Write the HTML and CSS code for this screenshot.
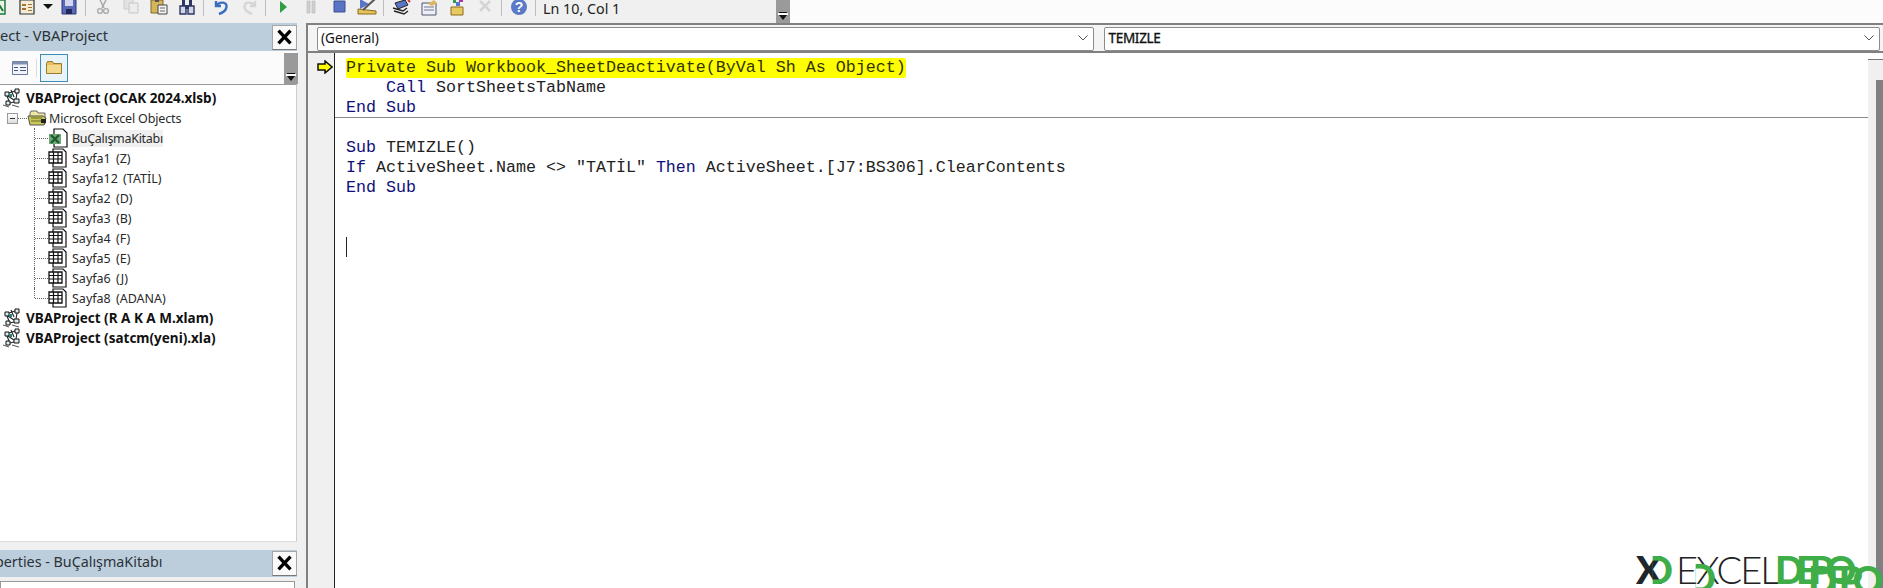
FILE: index.html
```html
<!DOCTYPE html>
<html lang="tr">
<head>
<meta charset="utf-8">
<title>VBA Editor</title>
<link rel="stylesheet" href="styles.css">
</head>
<body>
<svg class="defs" aria-hidden="true">
  <symbol id="project" viewBox="0 0 20 20">
    <path d="M3 4h4v4H3zM13 1h4v4h-4zM12 11h5v4h-5zM4 13h4v4H4z" fill="#dfeeee" stroke="#111" stroke-width="1"/>
    <path d="M5 8l2 5M7 5l6-2M15 5l-1 6M8 15l4-1M6 8l6 4M9 2l3 7" fill="none" stroke="#222" stroke-width="1.100"/>
    <path d="M7 6h3v3H7z" fill="#2f7f86"/>
    <path d="M1 17l6 2M10 17l7 2" stroke="#555" stroke-width="1"/>
  </symbol>
  <symbol id="folder" viewBox="0 0 20 20">
    <path d="M3 5l1-2h6l1 2h7v11H3z" fill="#f0e7a0" stroke="#666" stroke-width="1"/>
    <path d="M1 8h15l3 2-2 7H3z" fill="#c8c85a" stroke="#555" stroke-width="1"/>
    <path d="M4 10h11M4 13h12" stroke="#8a8a30" stroke-width="1.500"/>
    <path d="M14 11h5v4h-5z" fill="#222"/>
  </symbol>
  <symbol id="sheet" viewBox="0 0 20 20">
    <path d="M5 1h10l3 3v15H5z" fill="#fff" stroke="#111" stroke-width="1.200"/>
    <path d="M1 4h13v11H1z" fill="#fff" stroke="#111" stroke-width="1.300"/>
    <path d="M1 7.500h13M1 11h13M5.500 4v11M10 4v11" stroke="#111" stroke-width="1.200"/>
  </symbol>
  <symbol id="book" viewBox="0 0 20 20">
    <path d="M6 1h9l4 4v14H6z" fill="#fff" stroke="#111" stroke-width="1.200"/>
    <path d="M1 6h12v10H1z" fill="#6fa97b"/>
    <path d="M3 7l8 8M11 7l-8 8" stroke="#1f5a2d" stroke-width="2.400"/>
  </symbol>
  <symbol id="close" viewBox="0 0 25 25">
    <path d="M6 5l13 14M19 5L6 19" fill="none" stroke="#000" stroke-width="3.600"/>
  </symbol>
</svg>

<div class="app">
  <header class="toolbar">
    <svg class="ti w13" viewBox="0 0 13 20"><path d="M-8 1h13v14H-8z" fill="#e8f3e6" stroke="#1d7a3a" stroke-width="1.500"/><path d="M-2 4l5 8" stroke="#1d7a3a" stroke-width="2"/></svg>
    <svg class="ti" viewBox="0 0 28 20"><path d="M7 1h14v14H7z" fill="#f4ecd8" stroke="#333" stroke-width="1.200"/><path d="M9 5h4v2H9zM9 9h4v2H9zM15 5h4v1h-4zM15 8h4v1h-4zM15 11h4v1h-4z" fill="#a8722c"/></svg>
    <svg class="ti w14" viewBox="0 0 14 20"><path d="M2 5h10l-5 5z" fill="#111"/></svg>
    <svg class="ti" viewBox="0 0 28 20"><path d="M7 0h14v15H7z" fill="#5a68b8" stroke="#2e377e"/><path d="M10 1h8v6h-8z" fill="#d3d6ec"/><path d="M11 10h6v5h-6z" fill="#22285a"/></svg>
    <span class="sep"></span>
    <svg class="ti" viewBox="0 0 28 20"><path d="M11 1l4 8M17 1l-4 8" stroke="#aaa" stroke-width="1.600"/><circle cx="11" cy="12" r="2.400" fill="none" stroke="#aaa" stroke-width="1.400"/><circle cx="17" cy="12" r="2.400" fill="none" stroke="#aaa" stroke-width="1.400"/></svg>
    <svg class="ti" viewBox="0 0 28 20"><path d="M7 0h9v10H7z" fill="#e2e2e2" stroke="#ccc"/><path d="M12 4h9v10h-9z" fill="#ececec" stroke="#c6c6c6"/></svg>
    <svg class="ti" viewBox="0 0 28 20"><path d="M6 1h12v13H6z" fill="#d6b45a" stroke="#7a6a2a"/><path d="M10 0h4v3h-4z" fill="#555"/><path d="M13 6h9v9h-9z" fill="#f4f4f4" stroke="#444"/><path d="M15 9h5M15 12h5" stroke="#666"/></svg>
    <svg class="ti" viewBox="0 0 28 20"><path d="M7 7h6v8H7zM15 7h6v8h-6z" fill="#cfd6ea" stroke="#2d3560" stroke-width="1.400"/><path d="M9 1h3v6H9zM16 1h3v6h-3zM12 6h4v4h-4z" fill="#2d3560"/></svg>
    <span class="sep"></span>
    <svg class="ti" viewBox="0 0 28 20"><path d="M9 2v5h5M9.500 6.500C13 2 20 3 19.500 8 19 12 15 14 12 15" fill="none" stroke="#3a6fc0" stroke-width="2.400"/></svg>
    <svg class="ti" viewBox="0 0 28 20"><path d="M20 2v5h-5M19.500 6.500C16 2 9 3 9.500 8 10 12 14 14 17 15" fill="none" stroke="#d6d6d6" stroke-width="2.400"/></svg>
    <span class="sep"></span>
    <svg class="ti" viewBox="0 0 28 20"><path d="M11 2l7 6-7 6z" fill="#2f9e44"/></svg>
    <svg class="ti" viewBox="0 0 28 20"><path d="M10 2h3v12h-3zM15 2h3v12h-3z" fill="#d0d0d0" stroke="#bbb" stroke-width=".600"/></svg>
    <svg class="ti" viewBox="0 0 28 20"><path d="M9 2h11v11H9z" fill="#5b73c4" stroke="#3d4f96"/></svg>
    <svg class="ti" viewBox="0 0 28 20"><path d="M5 10v5h18v-3z" fill="#e6c25a" stroke="#8a6c1e"/><path d="M7 0v10l9-5" fill="#5a74c6"/><path d="M10 11L22 0" stroke="#555" stroke-width="2"/></svg>
    <span class="sep"></span>
    <svg class="ti" viewBox="0 0 28 20"><path d="M8 4l10-3 3 5-10 4z" fill="#5a74c6" stroke="#222"/><path d="M6 9l10 3 4-3M7 12l10 3 4-3" fill="none" stroke="#222" stroke-width="1.400"/><path d="M21 1l2 2" stroke="#c33" stroke-width="2"/></svg>
    <svg class="ti" viewBox="0 0 28 20"><path d="M7 4h14v12H7z" fill="#eef0f8" stroke="#556"/><path d="M9 8h10M9 11h10" stroke="#778"/><path d="M13 5l6-4 3 3-5 3z" fill="#e0b65c"/></svg>
    <svg class="ti" viewBox="0 0 28 20"><path d="M8 8h12v8H8z" fill="#e8c860" stroke="#8a6c1e"/><path d="M10 1h3v3h-3z" fill="#2f9e44"/><path d="M16 0h4v3h-4z" fill="#a33aa3"/><path d="M13 3h4v4h-4z" fill="#5a74c6"/></svg>
    <svg class="ti" viewBox="0 0 28 20"><path d="M9 2l10 10M19 2L9 12" stroke="#d4d4d4" stroke-width="2.600"/></svg>
    <span class="sep"></span>
    <svg class="ti" viewBox="0 0 28 20"><circle cx="14" cy="8" r="8" fill="#5a79c8"/><text class="helpq" x="14" y="13">?</text></svg>
    <span class="sep"></span>
    <span class="pos">Ln 10, Col 1</span>
    <span class="grip top-grip"><i></i></span>
  </header>

  <main class="workspace">
    <aside class="side">
      <div class="titlebar">
        <span class="tt tt-project">ect - VBAProject</span>
        <button class="x"><svg><use href="#close"/></svg></button>
      </div>
      <div class="minibar">
        <svg class="mini-view" viewBox="0 0 16 14"><path d="M.5.500h15v13H.5z" fill="#f1f3fa" stroke="#6a7a9a"/><path d="M.5.500h15v3H.5z" fill="#7f8fb0"/><path d="M2 6h4v1H2zM2 9h4v1H2zM8 6h6v1H8zM8 9h6v1H8z" fill="#4a5878"/></svg>
        <span class="minisep"></span>
        <span class="folderbtn"><svg viewBox="0 0 16 13"><path d="M.5 2.500l1-2h5l1 2h8v10H.5z" fill="#e9bb5a" stroke="#9a7a30"/><path d="M1 4h14v8H1z" fill="#f3d98c"/></svg></span>
        <span class="grip side-grip"><i></i></span>
      </div>
      <div class="tree">
        <div class="row root"><svg class="ic"><use href="#project"/></svg><b>VBAProject (OCAK 2024.xlsb)</b></div>
        <div class="row group"><span class="minus"></span><span class="dash"></span><svg class="ic"><use href="#folder"/></svg><span>Microsoft Excel Objects</span></div>
        <div class="row leaf"><svg class="ic"><use href="#book"/></svg><span class="selected">BuÇalışmaKitabı</span></div>
        <div class="row leaf"><svg class="ic"><use href="#sheet"/></svg><span>Sayfa1 (Z)</span></div>
        <div class="row leaf"><svg class="ic"><use href="#sheet"/></svg><span>Sayfa12 (TATİL)</span></div>
        <div class="row leaf"><svg class="ic"><use href="#sheet"/></svg><span>Sayfa2 (D)</span></div>
        <div class="row leaf"><svg class="ic"><use href="#sheet"/></svg><span>Sayfa3 (B)</span></div>
        <div class="row leaf"><svg class="ic"><use href="#sheet"/></svg><span>Sayfa4 (F)</span></div>
        <div class="row leaf"><svg class="ic"><use href="#sheet"/></svg><span>Sayfa5 (E)</span></div>
        <div class="row leaf"><svg class="ic"><use href="#sheet"/></svg><span>Sayfa6 (J)</span></div>
        <div class="row leaf last"><svg class="ic"><use href="#sheet"/></svg><span>Sayfa8 (ADANA)</span></div>
        <div class="row root"><svg class="ic"><use href="#project"/></svg><b>VBAProject (R A K A M.xlam)</b></div>
        <div class="row root"><svg class="ic"><use href="#project"/></svg><b>VBAProject (satcm(yeni).xla)</b></div>
      </div>
      <div class="titlebar props">
        <span class="tt tt-props">perties - BuÇalışmaKitabı</span>
        <button class="x"><svg><use href="#close"/></svg></button>
      </div>
      <div class="propbox"><b>Alfabetik</b> <span>Kategorize</span></div>
    </aside>

    <section class="editor">
      <div class="combos">
        <div class="combo"><span>(General)</span><svg class="chev" viewBox="0 0 10 6"><path d="M.5.500L5 5 9.500.5" fill="none" stroke="#555"/></svg></div>
        <div class="combo"><span class="proc-name">TEMIZLE</span><svg class="chev" viewBox="0 0 10 6"><path d="M.5.500L5 5 9.500.5" fill="none" stroke="#555"/></svg></div>
      </div>
      <div class="codewrap">
        <div class="gutter"><svg class="exec" viewBox="0 0 16 14"><path d="M1 4h7V1l7 6-7 6v-3H1z" fill="#ffff00" stroke="#111" stroke-width="1.500"/></svg></div>
        <div class="code">
<pre class="proc"><span class="hl">Private Sub Workbook_SheetDeactivate(ByVal Sh As Object)</span>
    <span class="kw">Call</span> SortSheetsTabName
<span class="kw">End Sub</span></pre><pre>

<span class="kw">Sub</span> TEMIZLE()
<span class="kw">If</span> ActiveSheet.Name &lt;&gt; "TATİL" <span class="kw">Then</span> ActiveSheet.[J7:BS306].ClearContents
<span class="kw">End Sub</span></pre>
          <div class="caret"></div>
        </div>
        <div class="scroll"><div class="thumb"></div></div>
      </div>
    </section>
  </main>

  <div class="logo">
    <span class="lg-x">X</span>
    <span class="lg-arc a1">D</span>
    <span class="lg-thin t1">EXCEL</span>
    <span class="lg-arc a2">D</span>
    <span class="lg-depo d1">DEPO</span>
    <span class="lg-depo d2">DEPO</span>
  </div>
</div>
</body>
</html>
```
FILE: styles.css
```css
html, body { margin: 0; padding: 0; height: 100%; overflow: hidden; }
body { background: #fdfcfc; font-family: "Noto Sans", "Open Sans", sans-serif; color: #222; }
.defs { position: absolute; width: 0; height: 0; }
.app { position: relative; width: 1883px; height: 588px; overflow: hidden; display: flex; flex-direction: column; }

.toolbar { height: 23px; width: 790px; flex: none; background: #f0f0f0; display: flex; align-items: flex-start; overflow: hidden; position: relative; }
.ti { width: 28px; height: 20px; flex: none; margin-top: -1px; }
.w13 { width: 13px; }
.w14 { width: 14px; }
.helpq { font: bold 14px "Liberation Sans", sans-serif; fill: #fff; text-anchor: middle; }
.sep { width: 6px; flex: none; height: 16px; box-sizing: border-box; padding-left: 2px; }
.sep::before { content: ""; display: block; width: 1px; height: 16px; background: #bdbdbd; }
.pos { margin-left: 4px; font-size: 14.300px; line-height: 18px; color: #222; white-space: nowrap; }
.grip { background: #9a9a9a; position: absolute; display: block; }
.grip i { position: absolute; left: 3px; bottom: 3px; width: 0; height: 0; border-left: 4px solid transparent; border-right: 4px solid transparent; border-top: 5px solid #111; }
.grip i::before { content: ""; position: absolute; left: -4px; top: -8px; width: 8px; height: 1px; background: #111; }
.grip i::after { content: ""; position: absolute; left: -5px; top: -7px; width: 10px; height: 2px; background: #fff; }
.top-grip { right: 0; top: 0; width: 14px; height: 23px; }

.workspace { flex: 1; min-height: 0; display: flex; }
.side { width: 306px; flex: none; background: #f0f0f0; display: flex; flex-direction: column; box-sizing: border-box; padding-right: 9px; }
.titlebar { height: 28px; flex: none; background: #bccddc; display: flex; align-items: center; overflow: hidden; }
.tt { font-size: 14.600px; color: #2b3238; white-space: nowrap; flex: 1; min-width: 0; padding-bottom: 5px; }
.tt-props { font-size: 14.300px; margin-left: -5px; }
.x { width: 25px; height: 25px; flex: none; padding: 0; box-sizing: border-box; background: #fafafa; border: 1px solid #a6a6a6; border-bottom-color: #777; display: block; }
.x svg { width: 23px; height: 23px; display: block; }

.minibar { height: 33px; flex: none; background: #fbfbfb; display: flex; align-items: center; position: relative; padding-left: 12px; box-sizing: border-box; }
.mini-view { width: 16px; height: 14px; flex: none; }
.minisep { width: 1px; height: 18px; background: #ddd; margin-left: 8px; }
.folderbtn { width: 28px; height: 28px; margin-left: 3px; box-sizing: border-box; border: 1px solid #3f8cb5; background: #e9f3fa; display: flex; align-items: center; justify-content: center; }
.folderbtn svg { width: 16px; height: 13px; }
.side-grip { right: -1px; top: 2px; width: 14px; height: 31px; }

.tree { flex: none; height: 458px; box-sizing: border-box; background: #fff; border-top: 1px solid #999; border-right: 1px solid #ccc; border-bottom: 1px solid #ddd; padding-top: 3px; }
.row { height: 20px; display: flex; align-items: center; position: relative; font-size: 12.500px; white-space: nowrap; color: #2a2a2a; }
.row b { font-size: 13.500px; color: #111; }
.ic { width: 20px; height: 20px; flex: none; margin-right: 4px; }
.root { padding-left: 2px; }
.group { padding-left: 7px; letter-spacing: -.15px; }
.minus { width: 9px; height: 9px; border: 1px solid #999; background: linear-gradient(#fff, #ddd); position: relative; flex: none; }
.minus::after { content: ""; position: absolute; left: 2px; top: 4px; width: 5px; height: 1px; background: #333; }
.dash { width: 9px; border-top: 1px dotted #666; flex: none; }
.group .ic { margin-right: 2px; }
.leaf { padding-left: 48px; word-spacing: 2px; }
.leaf .ic { margin-right: 4px; }
.leaf::before { content: ""; position: absolute; left: 34px; top: 0; height: 100%; border-left: 1px dotted #666; }
.leaf.last::before { height: 50%; }
.leaf::after { content: ""; position: absolute; left: 35px; top: 50%; width: 13px; border-top: 1px dotted #666; }
.selected { background: #f0f0f0; letter-spacing: -.3px; }

.props { margin-top: 8px; height: 27px; }
.propbox { margin: 4px 2px 0 0; flex: 1; min-height: 0; overflow: hidden; background: #fff; border: 1px solid #999; border-bottom: 0; padding: 5px 0 0 8px; font-size: 13px; line-height: 14px; }

.editor { flex: 1; min-width: 0; display: flex; flex-direction: column; border-left: 2px solid #808080; }
.combos { height: 30px; flex: none; box-sizing: border-box; border-top: 2px solid #808080; border-bottom: 2px solid #808080; background: #f4f4f4; display: flex; gap: 10px; padding: 2px 3px 0 9px; }
.combo { flex: 1; height: 24px; box-sizing: border-box; background: #fff; border: 1px solid #8c8c8c; border-radius: 2px; display: flex; align-items: center; justify-content: space-between; padding: 0 5px 2px 3px; font-size: 13.500px; color: #111; }
.proc-name { letter-spacing: -.3px; margin-left: 1px; -webkit-text-stroke: .35px #111; }
.chev { width: 10px; height: 6px; }

.codewrap { flex: 1; min-height: 0; display: flex; background: #fff; }
.gutter { width: 17px; flex: none; background: #f0f0f0; border-right: 1px solid #222; padding: 7px 0 0 9px; }
.exec { width: 16px; height: 14px; display: block; }
.code { flex: 1; min-width: 0; padding-top: 4px; }
pre { margin: 0; padding-left: 11px; font: 16.670px/20px "Liberation Mono", monospace; color: #222; position: relative; top: 1px; }
.proc { border-bottom: 1px solid #8a8a8a; height: 59px; top: 0; padding-top: 1px; margin-bottom: -1px; }
.proc .kw, .proc .hl { position: relative; }
.hl { background: #ffff00; border-radius: 2px; color: #333300; display: inline-block; }
.kw { color: #10107a; }
.caret { width: 1px; height: 20px; background: #222; margin: 40px 0 0 11px; }
.scroll { width: 15px; flex: none; background: #f0f0f0; box-sizing: border-box; border-top: 1px solid #777; margin-top: 6px; padding: 20px 0 0 8px; }
.thumb { height: 100%; background: #808080; }

.logo { position: absolute; left: 1630px; top: 548px; width: 253px; height: 40px; overflow: hidden; font-family: "Lato", sans-serif; }
.logo span { position: absolute; line-height: 1; white-space: nowrap; font-size: 38px; }
.lg-x { left: 6px; top: 2px; font-weight: 900; color: #20262b; }
.lg-arc { color: #3fae49; font-weight: 900; }
.a1 { left: 14px; top: 2px; clip-path: inset(0 0 0 30%); }
.a2 { left: 57px; top: 10px; clip-path: inset(0 0 0 30%); }
.lg-thin { color: #222; font-weight: 300; }
.t1 { left: 46px; top: 2px; letter-spacing: -2px; }
.lg-depo { color: #3fae49; font-weight: 900; }
.d1 { left: 145px; top: 2px; letter-spacing: -8px; }
.d2 { left: 178px; top: 12px; letter-spacing: -10px; }
```
